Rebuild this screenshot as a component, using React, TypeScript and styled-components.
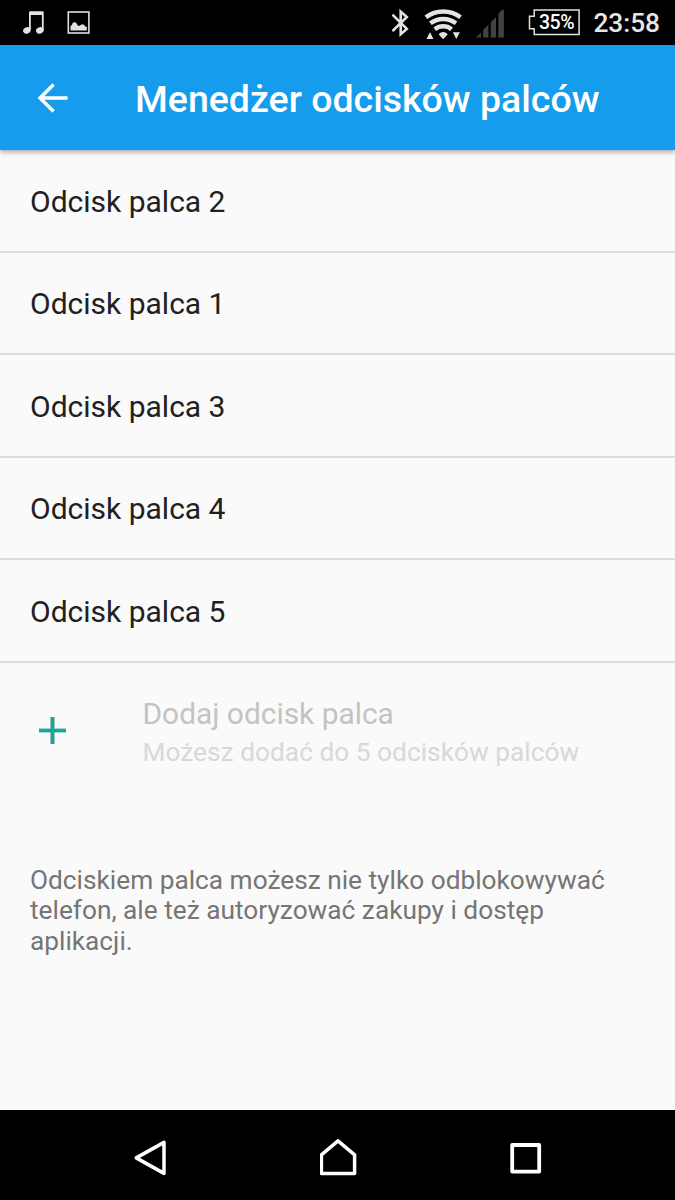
import React from "react";
import styled, { createGlobalStyle } from "styled-components";

const GlobalStyle = createGlobalStyle`
  * { box-sizing: border-box; }
  body {
    margin: 0;
    background: #fafafa;
    font-family: Roboto, "Liberation Sans", sans-serif;
  }
`;

const Screen = styled.div`
  display: flex;
  flex-direction: column;
  width: 675px;
  height: 1200px;
  overflow: hidden;
  background: #fafafa;
`;

const StatusBar = styled.header`
  display: flex;
  align-items: center;
  justify-content: space-between;
  flex: none;
  height: 45px;
  padding: 0 15px 0 23px;
  background: #000;
  color: #e6e6e6;
`;

const StatusGroup = styled.div<{ $gap: number }>`
  display: flex;
  align-items: center;
  gap: ${(p) => p.$gap}px;
  height: 45px;
`;

const Icon = styled.svg`
  display: block;
  flex: none;
`;

const Battery = styled.div`
  display: grid;
  width: 52px;
  height: 45px;
  margin-left: 9px;

  > * {
    grid-area: 1 / 1;
  }
`;

const BatteryLevel = styled.span`
  padding-left: 10.5px;
  font-size: 19.5px;
  font-weight: 500;
  letter-spacing: -0.4px;
  line-height: 45px;
  white-space: nowrap;
  color: #fff;
`;

const Clock = styled.time`
  margin-left: -1px;
  font-size: 26.25px;
  font-weight: 500;
  line-height: 46px;
  white-space: nowrap;
`;

const AppBar = styled.div`
  display: flex;
  align-items: center;
  flex: none;
  height: 105px;
  padding: 0 30px 0 37px;
  background: #169cec;
  color: #fff;
  box-shadow: 0 2px 5px rgba(0, 0, 0, 0.34);
  z-index: 1;
`;

const Title = styled.h1`
  margin: 2px 0 0 66px;
  font-size: 37.5px;
  font-weight: 500;
  line-height: 44px;
  white-space: nowrap;
`;

const List = styled.ul`
  flex: none;
  margin: 0;
  padding: 0;
  list-style: none;
`;

const ListItem = styled.li`
  display: flex;
  align-items: center;
  height: 102.5px;
  padding: 2px 30px 0;
  border-bottom: 2px solid #dcdcdc;
  font-size: 30px;
  color: #212121;
`;

const AddRow = styled.div`
  display: flex;
  align-items: center;
  flex: none;
  height: 136px;
  padding: 0 30px 0 39px;
`;

const AddText = styled.div`
  display: flex;
  flex-direction: column;
  margin: 2px 0 0 76.5px;
`;

const AddTitle = styled.span`
  font-size: 29.9px;
  line-height: 40px;
  color: #c3c3c3;
`;

const AddSummary = styled.span`
  font-size: 26.3px;
  line-height: 36px;
  color: #d8d8d8;
`;

const Footnote = styled.p`
  flex: 1;
  margin: 0;
  padding: 66px 45px 0 30px;
  font-size: 26.25px;
  line-height: 30.8px;
  color: #757575;
`;

const NavBar = styled.nav`
  display: flex;
  align-items: center;
  justify-content: space-between;
  flex: none;
  height: 90px;
  padding: 6px 133px 0 133px;
  background: #000;
`;

const fingerprints = [2, 1, 3, 4, 5];

const MusicIcon = () => (
  <Icon width="22" height="45" viewBox="0 0 22 45" fill="#e2e2e2">
    <path d="M6 12.5q0-1.2 1.2-1.2h12.3q1.2 0 1.2 1.2V30h-1.8V15H7.8v15H6z" />
    <ellipse cx="3.9" cy="30.4" rx="3.9" ry="3.2" transform="rotate(-20 3.9 30.4)" />
    <ellipse cx="16.9" cy="30.4" rx="3.9" ry="3.2" transform="rotate(-20 16.9 30.4)" />
  </Icon>
);

const PictureIcon = () => (
  <Icon width="23" height="45" viewBox="0 0 23 45">
    <rect x="1.3" y="12" width="20.6" height="21" fill="none" stroke="#dedede" strokeWidth="1.6" />
    <path d="M3.5 30.5v-4.6l1.4-.9.8-2 1.9-.9 1.9 1.1 1.2 2.3 1.6.5 2.6-1.7 2.1.5 1 1.5 1.8.8v3.4z" fill="#e2e2e2" />
  </Icon>
);

const BluetoothIcon = () => (
  <Icon width="18" height="45" viewBox="0.5 0 18 45" fill="none" stroke="#e2e2e2" strokeWidth="2.6">
    <path d="M1 14.6 15.3 28.9 9.2 34.2V11.6l6.1 5.4L1 31.2" />
  </Icon>
);

const WifiIcon = () => (
  <Icon width="38" height="45" viewBox="-0.5 0 38 45">
    <g fill="none" stroke="#e4e4e4" strokeWidth="4.5">
      <path d="M1.4 17.2A28.8 28.8 0 0 1 36 17.2" />
      <path d="M5.9 23.2A21.2 21.2 0 0 1 31.5 23.2" />
      <path d="M10.3 29.2A13.6 13.6 0 0 1 27.1 29.2" />
    </g>
    <g fill="#e4e4e4">
      <path d="M14.1 34.3q4.6-4.4 9.2 0L18.7 39.2z" />
      <path d="M5.5 32.3 9 39H2z" />
      <path d="M28.3 32.3h7L31.8 39z" />
    </g>
  </Icon>
);

const SignalIcon = () => (
  <Icon width="29" height="45" viewBox="0 0 29 45" fill="#424242">
    <path d="M0 37.5 5 32.4v5.1zM7.2 30.1l5.2-5.3v12.7H7.2zM14.8 22.3l5.2-5.4v20.6h-5.2zM22.3 14.6q2-4.4 5.6-5v27.9h-5.6z" />
  </Icon>
);

const BatteryOutline = () => (
  <Icon width="52" height="45" viewBox="0 0 52 45" fill="none" stroke="#e2e2e2" strokeWidth="1.5">
    <path d="M6.2 9.9h44.9v24.7H6.2v-5.8H1.5V16.2h4.7z" />
  </Icon>
);

const BackArrow = () => (
  <Icon width="32" height="32" viewBox="0 0 32 32" fill="none" stroke="#fff" strokeWidth="3.5">
    <path d="M30.6 16H3.4M16.6 2.4 3 16l13.6 13.6" />
  </Icon>
);

const PlusIcon = () => (
  <Icon width="27" height="27" viewBox="0 0 27 27">
    <path d="M0 13.5h27" stroke="#89cfe0" strokeWidth="4.6" />
    <path d="M13.5 0v27" stroke="#9cb8c4" strokeWidth="4.6" />
    <path d="M0 13.5h27M13.5 0v27" stroke="#0aae90" strokeWidth="3.2" />
  </Icon>
);

export default function App() {
  return (
    <Screen>
      <GlobalStyle />
      <StatusBar>
        <StatusGroup $gap={22}>
          <MusicIcon />
          <PictureIcon />
        </StatusGroup>
        <StatusGroup $gap={14}>
          <BluetoothIcon />
          <WifiIcon />
          <SignalIcon />
          <Battery>
            <BatteryOutline />
            <BatteryLevel>35%</BatteryLevel>
          </Battery>
          <Clock>23:58</Clock>
        </StatusGroup>
      </StatusBar>
      <AppBar>
        <BackArrow />
        <Title>Menedżer odcisków palców</Title>
      </AppBar>
      <List>
        {fingerprints.map((n) => (
          <ListItem key={n}>Odcisk palca {n}</ListItem>
        ))}
      </List>
      <AddRow>
        <PlusIcon />
        <AddText>
          <AddTitle>Dodaj odcisk palca</AddTitle>
          <AddSummary>Możesz dodać do 5 odcisków palców</AddSummary>
        </AddText>
      </AddRow>
      <Footnote>
        Odciskiem palca możesz nie tylko odblokowywać telefon, ale też autoryzować zakupy i dostęp aplikacji.
      </Footnote>
      <NavBar>
        <Icon width="34" height="40" viewBox="0 0 34 40" fill="none" stroke="#fff" strokeWidth="3.5" strokeLinejoin="round">
          <path d="M31 4.4v31L3.2 19.9z" />
        </Icon>
        <Icon width="38" height="40" viewBox="1 0 38 40" fill="none" stroke="#fff" strokeWidth="3.5" strokeLinejoin="round">
          <path d="M19 2.9 35.6 16.8v18.6H2.4V16.8z" />
        </Icon>
        <Icon width="32" height="40" viewBox="0 0 32 40" fill="none" stroke="#fff" strokeWidth="3.8" strokeLinejoin="round">
          <path d="M2.2 7h27v26.6h-27z" />
        </Icon>
      </NavBar>
    </Screen>
  );
}
